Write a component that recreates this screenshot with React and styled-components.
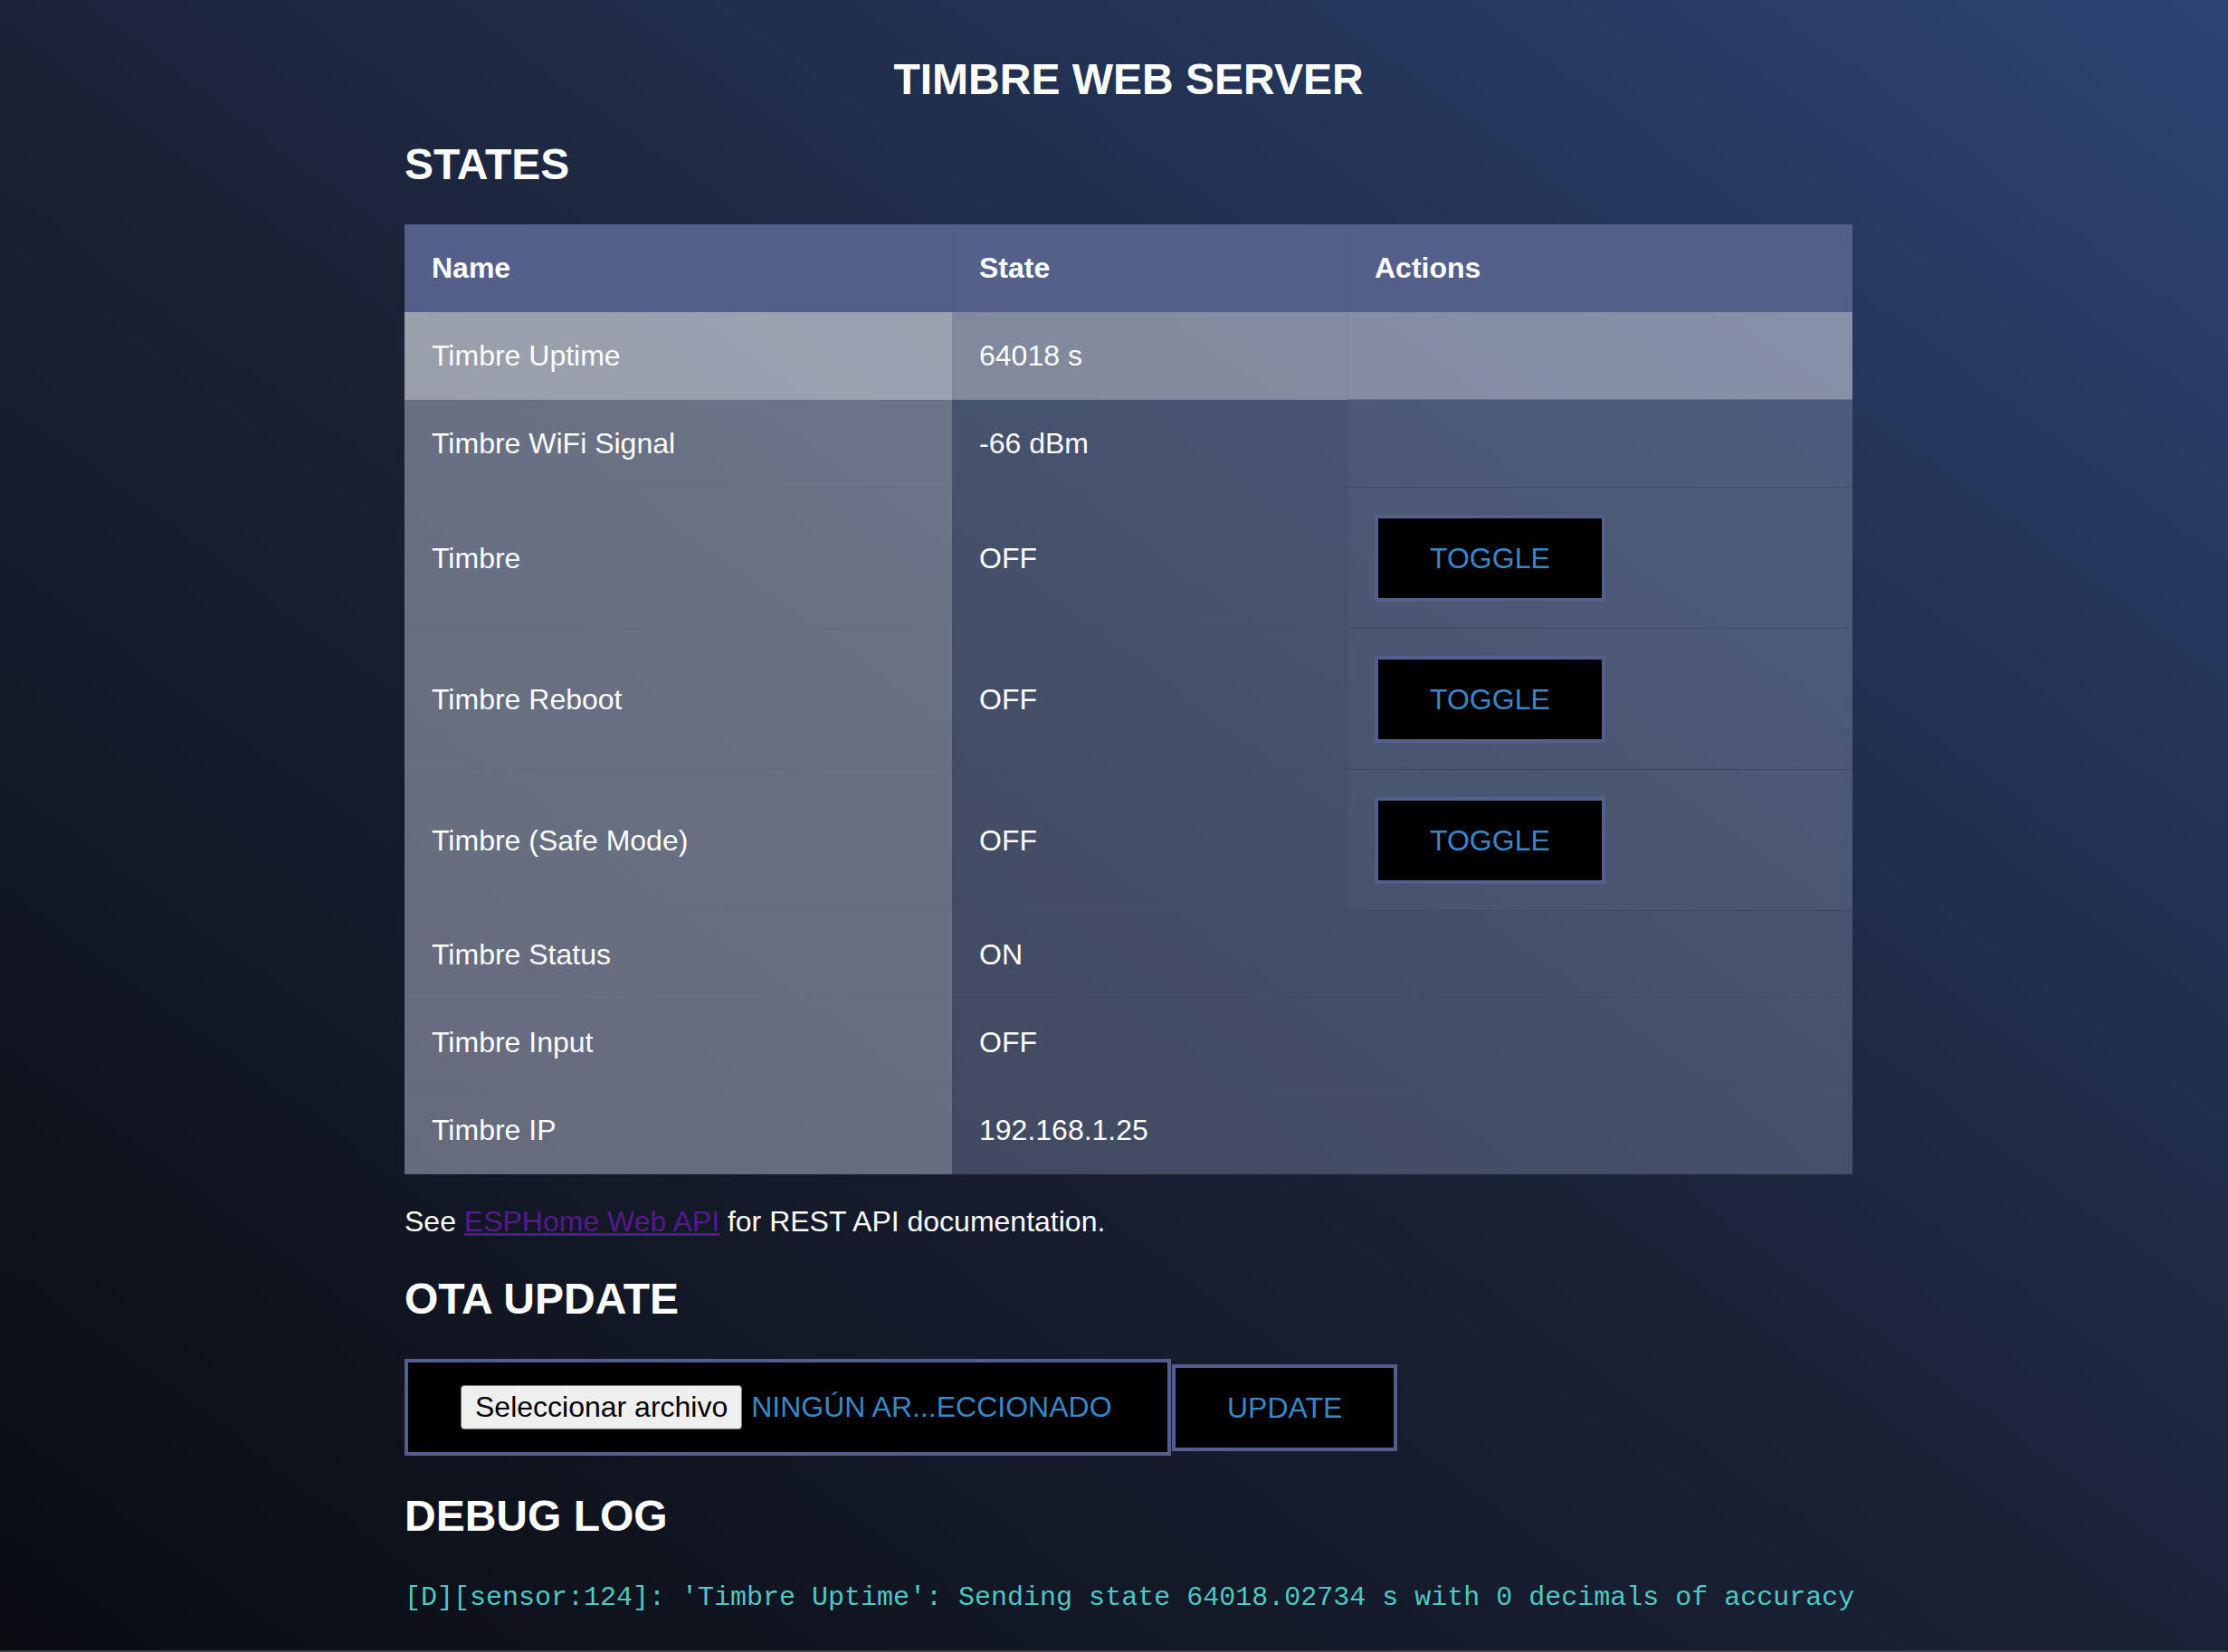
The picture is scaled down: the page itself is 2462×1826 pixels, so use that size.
import styled, { createGlobalStyle } from "styled-components";

const GlobalStyle = createGlobalStyle`
   html, body {
      margin: 0;
      padding: 0;
   }
   body {
      font-family: "Liberation Sans", Arial, Helvetica, sans-serif;
      color: #fff;
      background: #0b0e16;
   }
`;

const Page = styled.div`
   box-sizing: border-box;
   min-height: 100vh;
   padding: 60px 0 40px 32px;
   background: linear-gradient(to top right, #0a0c12 0%, #1b2338 50%, #2c4474 100%);
   border-bottom: 2px solid #3a3d46;
`;

const Container = styled.main`
   width: 1600px;
   margin: 0 auto;
`;

const Title = styled.h1`
   margin: 0;
   font-size: 48px;
   line-height: 55px;
   font-weight: 700;
   text-align: center;
`;

const SectionTitle = styled.h2`
   margin: 39px 0 39px;
   font-size: 48px;
   line-height: 55px;
   font-weight: 700;
`;

const Table = styled.table`
   width: 1600px;
   border-collapse: collapse;
   table-layout: fixed;
   background: rgba(120, 130, 160, 0.45);
   font-size: 32px;
   line-height: 37px;
`;

const HeadRow = styled.tr`
   background: #55608a;
`;

const HeadCell = styled.th`
   box-sizing: border-box;
   width: ${props => props.$width}px;
   padding: 30px;
   text-align: left;
   font-weight: 700;
   box-shadow: inset 1px 0 0 rgba(0, 0, 0, 0.04);
`;

const Row = styled.tr`
   background: ${props => props.$highlight ? "rgba(255, 255, 255, 0.32)" : "transparent"};
`;

const Cell = styled.td`
   padding: 30px;
   vertical-align: middle;
   white-space: nowrap;
   box-shadow: inset 0 -1px 0 rgba(0, 0, 0, 0.025);
`;

const NameCell = styled(Cell)`
   background: rgba(255, 255, 255, 0.2);
`;

const ActionCell = styled(Cell)`
   background: rgba(255, 255, 255, 0.025);
   box-shadow: inset 1px 0 0 rgba(0, 0, 0, 0.05), inset 0 -1px 0 rgba(20, 30, 60, 0.22);
`;

const ActionButton = styled.button`
   display: block;
   margin: 0;
   padding: 25px 57px;
   background: #000;
   color: #3a87c8;
   border: 4px solid #535e8c;
   font-family: inherit;
   font-size: 32px;
   line-height: 38px;
   text-transform: uppercase;
   cursor: pointer;
`;

const Note = styled.p`
   margin: 34px 0 38px;
   font-size: 32px;
   line-height: 37px;
`;

const DocLink = styled.a`
   color: #551a8b;
   text-decoration: underline;
`;

const UploadForm = styled.form`
   display: flex;
   align-items: center;
   gap: 1px;
`;

const FileBox = styled.label`
   box-sizing: border-box;
   display: flex;
   align-items: center;
   gap: 10px;
   width: 847px;
   padding: 25px 58px;
   background: #000;
   border: 4px solid #535e8c;
`;

const PickButton = styled.span`
   padding: 5px 15px;
   background: #efefef;
   color: #000;
   border: 1px solid #767676;
   border-radius: 4px;
   font-size: 32px;
   line-height: 37px;
`;

const FileName = styled.span`
   color: #3a87c8;
   font-size: 32px;
   line-height: 37px;
   text-transform: uppercase;
   white-space: nowrap;
`;

const LogLine = styled.pre`
   margin: 46px 0 0;
   font-family: "Courier New", "Liberation Mono", monospace;
   font-size: 30px;
   line-height: 34px;
   color: #4fc8c4;
   white-space: pre;
`;

const states = [
   { name: "Timbre Uptime", state: "64018 s", cell: true, highlight: true },
   { name: "Timbre WiFi Signal", state: "-66 dBm", cell: true },
   { name: "Timbre", state: "OFF", toggle: true },
   { name: "Timbre Reboot", state: "OFF", toggle: true },
   { name: "Timbre (Safe Mode)", state: "OFF", toggle: true },
   { name: "Timbre Status", state: "ON" },
   { name: "Timbre Input", state: "OFF" },
   { name: "Timbre IP", state: "192.168.1.25" },
];

const App = () => {
   return (
      <Page>
         <GlobalStyle />
         <Container>
            <Title>TIMBRE WEB SERVER</Title>

            <SectionTitle>STATES</SectionTitle>
            <Table>
               <thead>
                  <HeadRow>
                     <HeadCell $width={605}>Name</HeadCell>
                     <HeadCell $width={437}>State</HeadCell>
                     <HeadCell $width={558}>Actions</HeadCell>
                  </HeadRow>
               </thead>
               <tbody>
                  {states.map((item) => (
                     <Row key={item.name} $highlight={item.highlight}>
                        <NameCell>{item.name}</NameCell>
                        <Cell>{item.state}</Cell>
                        {item.toggle ?
                           <ActionCell>
                              <ActionButton type="button">Toggle</ActionButton>
                           </ActionCell> :
                           item.cell ? <ActionCell /> : <Cell />
                        }
                     </Row>
                  ))}
               </tbody>
            </Table>

            <Note>
               See <DocLink href="#">ESPHome Web API</DocLink> for REST API documentation.
            </Note>

            <SectionTitle>OTA UPDATE</SectionTitle>
            <UploadForm onSubmit={(e) => e.preventDefault()}>
               <FileBox>
                  <PickButton>Seleccionar archivo</PickButton>
                  <FileName>Ningún ar...eccionado</FileName>
               </FileBox>
               <ActionButton type="submit">Update</ActionButton>
            </UploadForm>

            <SectionTitle>DEBUG LOG</SectionTitle>
            <LogLine>[D][sensor:124]: 'Timbre Uptime': Sending state 64018.02734 s with 0 decimals of accuracy</LogLine>
         </Container>
      </Page>
   );
};

export default App;
